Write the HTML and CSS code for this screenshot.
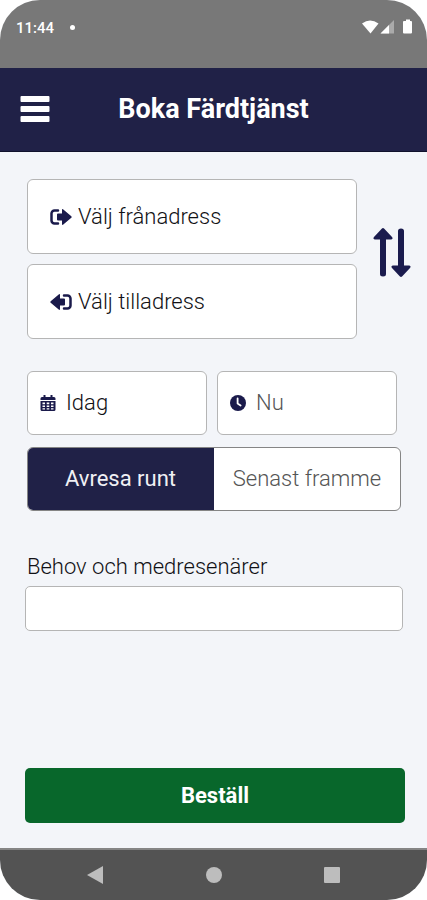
FILE: index.html
```html
<!DOCTYPE html>
<html lang="sv">
<head>
<meta charset="utf-8">
<meta name="viewport" content="width=device-width, initial-scale=1">
<title>Boka Färdtjänst</title>
<link rel="stylesheet" href="styles.css">
</head>
<body>
<div class="phone">
  <div class="status">
    <span class="time">11:44</span>
    <span class="dot"></span>
    <svg class="signals" viewBox="0 0 52 16" aria-hidden="true">
      <path d="M1 4.500Q9 -1.500 17.500 4.500L9.500 14.500Z" fill="#fff"/>
      <path d="M33 1v13.500H19.500Z" fill="#aaa"/>
      <path d="M28 6v8.500H19.500Z" fill="#fff"/>
      <path d="M43 2h2V.5h4V2h1q1 0 1 1v10.500q0 1-1 1h-7q-1 0-1-1V3q0-1 1-1Z" fill="#fff"/>
    </svg>
  </div>
  <header class="topbar">
    <button class="menu" type="button" aria-label="Meny">
      <svg viewBox="0 0 30 26" aria-hidden="true"><path d="M1.500 0h27a1 1 0 0 1 1 1v4a1 1 0 0 1-1 1h-27a1 1 0 0 1-1-1V1a1 1 0 0 1 1-1ZM1.500 10h27a1 1 0 0 1 1 1v4a1 1 0 0 1-1 1h-27a1 1 0 0 1-1-1v-4a1 1 0 0 1 1-1ZM1.500 20h27a1 1 0 0 1 1 1v4a1 1 0 0 1-1 1h-27a1 1 0 0 1-1-1v-4a1 1 0 0 1 1-1Z"/></svg>
    </button>
    <h1>Boka Färdtjänst</h1>
  </header>
  <form class="booking">
    <div class="route">
      <div class="addresses">
        <label class="field address">
          <svg viewBox="0 0 22 16" aria-hidden="true"><path d="M8 1.500H4.500a3 3 0 0 0-3 3v7a3 3 0 0 0 3 3H8" fill="none" stroke="currentColor" stroke-width="2.500" stroke-linecap="round"/><path d="M13 .3 21.300 7.200q.8.800 0 1.600L13 15.700q-1 .6-1-.6V11.500H8q-1 0-1-1v-5q0-1 1-1h4V.9q0-1.200 1-.6Z"/></svg>
          <input type="text" placeholder="Välj frånadress" aria-label="Frånadress">
        </label>
        <label class="field address">
          <svg viewBox="0 0 22 16" aria-hidden="true"><path d="M14 1.500h3.500a3 3 0 0 1 3 3v7a3 3 0 0 1-3 3H14" fill="none" stroke="currentColor" stroke-width="2.500" stroke-linecap="round"/><path d="M9 .3.700 7.200q-.8.800 0 1.600L9 15.700q1 .6 1-.6V11.500h4q1 0 1-1v-5q0-1-1-1h-4V.9q0-1.200-1-.6Z"/></svg>
          <input type="text" placeholder="Välj tilladress" aria-label="Tilladress">
        </label>
      </div>
      <button class="swap" type="button" aria-label="Byt adresser">
        <svg viewBox="0 0 38 49" aria-hidden="true"><path d="M8.700.8q1.300-1.400 2.600 0L19 9q1.500 2-.8 2.500H13V46q0 2.500-3 2.500T7 46V11.500H1.800Q-.5 11 1 9ZM26.700 48.200q1.300 1.400 2.600 0L37 40q1.500-2-.8-2.500H31V3q0-2.500-3-2.500T25 3v34.500h-5.200q-2.300.5-.8 2.500Z"/></svg>
      </button>
    </div>
    <div class="when">
      <label class="field moment">
        <svg viewBox="0 0 16 16" aria-hidden="true"><path fill-rule="evenodd" d="M3.500 0h2v2h5V0h2v2h1.500q1.500 0 1.500 1.500V5H.5V3.500Q.5 2 2 2h1.500ZM.5 6h15v8.500Q15.500 16 14 16H2Q.5 16 .5 14.500ZM2.500 7.500v1.800h2.500V7.500ZM6.700 7.500v1.800h2.600V7.500ZM11 7.500v1.800h2.500V7.500ZM2.500 10.500v1.500h2.500v-1.500ZM6.700 10.500v1.500h2.600v-1.500ZM11 10.500v1.500h2.500v-1.500ZM2.500 13.200v1.200h2.500v-1.200ZM6.700 13.200v1.200h2.600v-1.200ZM11 13.200v1.200h2.500v-1.200Z"/></svg>
        <input type="text" value="Idag" aria-label="Datum">
      </label>
      <label class="field moment">
        <svg viewBox="0 0 16 16" aria-hidden="true"><circle cx="8" cy="8" r="8"/><path d="M7.600 3.500v5l3 2" fill="none" stroke="#fff" stroke-width="1.800" stroke-linecap="round" stroke-linejoin="round"/></svg>
        <input class="muted" type="text" placeholder="Nu" aria-label="Tid">
      </label>
    </div>
    <div class="toggle">
      <button class="selected" type="button" aria-pressed="true">Avresa runt</button>
      <button type="button" aria-pressed="false">Senast framme</button>
    </div>
    <label class="caption" for="needs">Behov och medresenärer</label>
    <input class="needs" id="needs" type="text">
    <button class="submit" type="submit">Beställ</button>
  </form>
  <nav class="system">
    <button type="button" aria-label="Tillbaka"><svg viewBox="0 0 18 18" aria-hidden="true"><path d="M17 0v18L1 9Z"/></svg></button>
    <button type="button" aria-label="Hem"><svg viewBox="0 0 18 18" aria-hidden="true"><circle cx="9" cy="9" r="8"/></svg></button>
    <button type="button" aria-label="Översikt"><svg viewBox="0 0 18 18" aria-hidden="true"><rect x="1" y="1" width="16" height="16" rx="1"/></svg></button>
  </nav>
</div>
</body>
</html>
```
FILE: styles.css
```css
* {
  box-sizing: border-box;
}

body {
  margin: 0;
  background: #fff;
  color: #111115;
  font: 300 22px/28px Roboto, sans-serif;
}

button,
input {
  margin: 0;
  padding: 0;
  border: 0;
  background: none;
  color: inherit;
  font: inherit;
}

svg {
  display: block;
  flex: none;
  fill: currentColor;
}

.phone {
  display: flex;
  flex-direction: column;
  min-height: 100vh;
  overflow: hidden;
  border-radius: 40px;
  background: #f3f5f9;
}

.status {
  display: flex;
  gap: 16px;
  height: 68px;
  padding: 18px 14px 0 16px;
  background: #787878;
  color: #fff;
  font-size: 15px;
  line-height: 20px;
  font-weight: 500;
}

.dot {
  width: 5px;
  height: 5px;
  margin-top: 7px;
  border-radius: 50%;
  background: #fff;
}

.signals {
  width: 52px;
  height: 16px;
  margin: 1px 0 0 auto;
}

.topbar {
  display: grid;
  grid-template-columns: 30px 1fr 30px;
  align-items: center;
  height: 84px;
  padding: 0 20px 2px;
  border-bottom: 1px solid #10112c;
  background: #202147;
  color: #fff;
}

.menu svg {
  width: 30px;
  height: 26px;
}

h1 {
  margin: 0;
  font-size: 27px;
  line-height: 32px;
  font-weight: 700;
  text-align: center;
}

.booking {
  display: flex;
  flex: 1;
  flex-direction: column;
  padding: 27px 22px 25px 25px;
}

.route {
  display: flex;
  align-items: center;
  gap: 16px;
  margin: 0 -6px 32px 2px;
}

.addresses {
  display: grid;
  flex: 1;
  gap: 10px;
}

.field {
  display: flex;
  align-items: center;
  border: 1px solid #b5b5b5;
  border-radius: 6px;
  background: #fff;
}

.field svg {
  color: #1a1a4b;
}

.field input {
  flex: 1;
  width: 0;
  min-width: 0;
}

.field input::placeholder {
  color: #111115;
  opacity: 1;
}

.field .muted::placeholder {
  color: #555;
}

.address {
  gap: 6px;
  height: 75px;
  padding: 0 22px;
}

.address svg {
  width: 22px;
  height: 16px;
}

.swap {
  padding-bottom: 14px;
  color: #1a1b4e;
}

.swap svg {
  width: 38px;
  height: 49px;
}

.when {
  display: grid;
  grid-template-columns: 1fr 1fr;
  gap: 10px;
  margin: 0 8px 12px 2px;
}

.moment {
  gap: 10px;
  height: 64px;
  padding: 0 12px;
}

.moment svg {
  width: 16px;
  height: 16px;
}

.toggle {
  display: grid;
  grid-template-columns: 1fr 1fr;
  height: 64px;
  margin: 0 4px 42px 2px;
  overflow: hidden;
  border: 1px solid #858585;
  border-radius: 6px;
  background: #fff;
  color: #555;
}

.toggle .selected {
  margin: -1px 0 -1px -1px;
  background: #202147;
  color: #f0f0f4;
  font-weight: 400;
}

.caption {
  padding-left: 2px;
}

.needs {
  width: auto;
  height: 45px;
  margin: 5px 2px 0 0;
  border: 1px solid #b5b5b5;
  border-radius: 5px;
  background: #fff;
}

.submit {
  height: 55px;
  margin-top: auto;
  border-radius: 5px;
  background: #08672b;
  color: #fff;
  font-weight: 700;
}

.system {
  display: flex;
  justify-content: space-between;
  height: 52px;
  padding: 0 86px;
  border-top: 2px solid #858585;
  background: #535353;
  color: #bdbdbd;
}

.system svg {
  width: 18px;
  height: 18px;
}
```
